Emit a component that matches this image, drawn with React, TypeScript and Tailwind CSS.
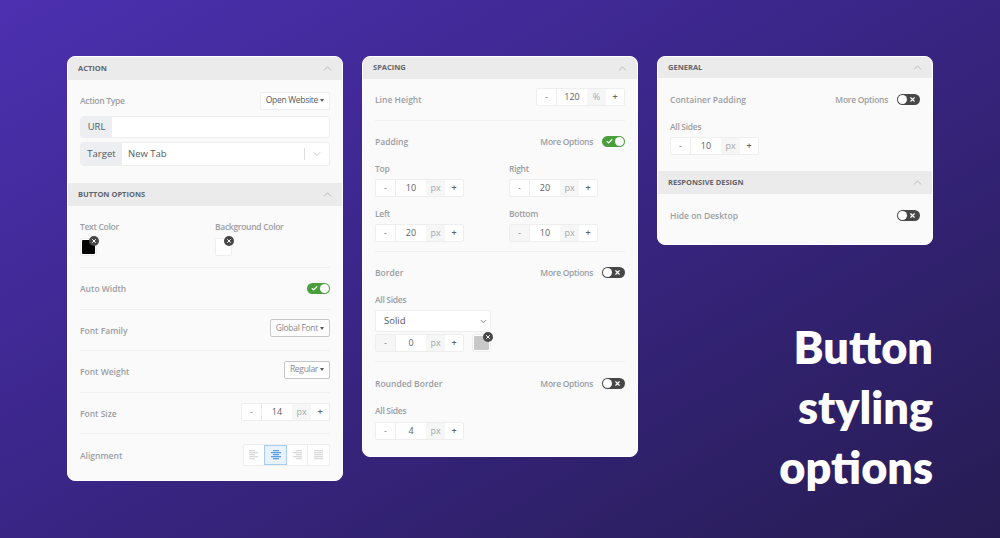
import { Check, ChevronDown, ChevronUp, X } from "lucide-react";
import type { ReactNode } from "react";

function SectionHeader({ title, className = "h-[23px]" }: { title: string; className?: string }) {
  return (
    <div className={`flex items-center justify-between bg-[#ebebeb] pl-[10px] pr-[8px] ${className}`}>
      <span className="text-[7.5px] font-bold uppercase text-[#5f656c]">{title}</span>
      <ChevronUp size={13} strokeWidth={1.5} className="text-[#a9acb0]" />
    </div>
  );
}

function Label({ children, small = false }: { children: ReactNode; small?: boolean }) {
  return (
    <span className={`block text-[8.5px] font-semibold leading-[9px] text-[#9a9da2] ${small ? "tracking-[-0.3px]" : ""}`}>
      {children}
    </span>
  );
}

function Divider() {
  return <div className="h-px bg-[#f0f0f0]" />;
}

function Stepper({ value, unit = "px", muted = false, className = "" }: { value: string; unit?: string; muted?: boolean; className?: string }) {
  return (
    <div className={`flex h-[18px] w-[89px] shrink-0 items-stretch rounded-[2px] border border-[#eeeeee] bg-white text-[9px] text-[#5d6166] ${className}`}>
      <span className={`flex w-[19px] items-center justify-center text-[#808388] ${muted ? "bg-[#f6f6f6]" : ""}`}>-</span>
      <span className="flex w-[31px] items-center justify-center border-l border-[#eeeeee]">{value}</span>
      <span className="flex w-[19px] items-center justify-center bg-[#f6f6f6] text-[#a5a8ac]">{unit}</span>
      <span className="flex flex-1 items-center justify-center font-semibold">+</span>
    </div>
  );
}

function Toggle({ on = false }: { on?: boolean }) {
  if (on) {
    return (
      <div className="flex h-[11px] w-[23px] items-center justify-between rounded-full bg-[#4a9e3c] pl-[4px] pr-px">
        <Check size={7} strokeWidth={4} className="text-white" />
        <span className="h-[9px] w-[9px] rounded-full bg-white" />
      </div>
    );
  }
  return (
    <div className="flex h-[11px] w-[23px] items-center justify-between rounded-full bg-[#474747] pl-px pr-[4px]">
      <span className="h-[9px] w-[9px] rounded-full bg-white" />
      <X size={7} strokeWidth={4} className="text-white" />
    </div>
  );
}

function MoreOptions({ on = false }: { on?: boolean }) {
  return (
    <div className="flex items-center gap-[9px]">
      <Label small>More Options</Label>
      <Toggle on={on} />
    </div>
  );
}

function Swatch({ color, className = "h-[18px] w-[18px]" }: { color: string; className?: string }) {
  return (
    <div className={`relative rounded-[2px] border border-[#eeeeee] bg-white p-px ${className}`}>
      <div className={`h-full w-full rounded-[1px] ${color}`} />
      <span className="absolute -top-[3px] -right-[3px] flex h-[10px] w-[10px] items-center justify-center rounded-full bg-[#474747]">
        <X size={6} strokeWidth={4} className="text-white" />
      </span>
    </div>
  );
}

function Dropdown({ label, outlined = false }: { label: string; outlined?: boolean }) {
  return (
    <div
      className={`flex h-[18px] items-center gap-[2px] rounded-[2px] bg-white px-[5px] text-[8.5px] tracking-[-0.3px] ${
        outlined ? "mb-[4px] border border-[#c4c6c8] text-[#85888d]" : "border border-[#f0f0f0] text-[#55595e]"
      }`}
    >
      {label}
      <span className="h-0 w-0 border-x-[2.5px] border-t-[3px] border-x-transparent border-t-[#55595e]" />
    </div>
  );
}

function AlignIcon({ lines, color }: { lines: [number, number][]; color: string }) {
  return (
    <svg width="10" height="10" viewBox="0 0 10 10" className={color}>
      {lines.map(([x, w], i) => (
        <rect key={i} x={x} y={i * 2} width={w} height="1.3" fill="currentColor" />
      ))}
    </svg>
  );
}

function Alignment() {
  const gray = "text-[#d9dadb]";
  return (
    <div className="flex h-[22px] w-[87px] items-stretch rounded-[2px] border border-[#eeeeee] bg-white">
      <div className="flex w-[20px] items-center justify-center">
        <AlignIcon color={gray} lines={[[0, 6], [0, 9], [0, 6], [0, 9], [0, 6]]} />
      </div>
      <div className="flex w-[23px] items-center justify-center border border-[#a9cdf2] bg-[#e8f2fd]">
        <AlignIcon color="text-[#5a9fe8]" lines={[[2, 6], [0, 10], [2, 6], [0, 10], [2, 6]]} />
      </div>
      <div className="flex w-[21px] items-center justify-center border-r border-[#eeeeee]">
        <AlignIcon color={gray} lines={[[4, 6], [1, 9], [4, 6], [1, 9], [4, 6]]} />
      </div>
      <div className="flex flex-1 items-center justify-center">
        <AlignIcon color={gray} lines={[[0, 9], [0, 9], [0, 9], [0, 9], [0, 9]]} />
      </div>
    </div>
  );
}

function Row({ children, className = "" }: { children: ReactNode; className?: string }) {
  return <div className={`flex items-center justify-between ${className}`}>{children}</div>;
}

function Panel({ children }: { children: ReactNode }) {
  return <div className="w-[276px] overflow-hidden rounded-[8px] border border-white bg-[#fafafa]">{children}</div>;
}

function ActionPanel() {
  return (
    <Panel>
      <SectionHeader title="Action" />
      <div className="px-[12px] pb-[17px]">
        <Row className="mt-[12px] h-[17px]">
          <Label small>Action Type</Label>
          <Dropdown label="Open Website" />
        </Row>
        <div className="mt-[7px] flex h-[22px] overflow-hidden rounded-[3px] border border-[#eeeeee] bg-white text-[9.5px] text-[#55595e]">
          <span className="flex w-[31px] items-center justify-center bg-[#eceef1]">URL</span>
        </div>
        <div className="mt-[4px] flex h-[24px] items-center overflow-hidden rounded-[3px] border border-[#eeeeee] bg-white text-[9.5px] text-[#55595e]">
          <span className="flex h-full w-[41px] items-center justify-center bg-[#eceef1]">Target</span>
          <span className="ml-[6px] flex-1">New Tab</span>
          <span className="h-[12px] w-px bg-[#dddddd]" />
          <ChevronDown size={12} strokeWidth={1.5} className="mx-[6px] text-[#b5b7ba]" />
        </div>
      </div>
      <SectionHeader title="Button Options" />
      <div className="px-[12px]">
        <div className="flex h-[61px] pt-[16px]">
          <div className="w-[135px]">
            <Label small>Text Color</Label>
            <Swatch color="bg-black" className="mt-[7px] h-[18px] w-[17px]" />
          </div>
          <div>
            <Label small>Background Color</Label>
            <Swatch color="bg-white" className="mt-[7px] h-[18px] w-[17px]" />
          </div>
        </div>
        <Divider />
        <Row className="h-[40.5px] pt-px">
          <Label>Auto Width</Label>
          <Toggle on />
        </Row>
        <Divider />
        <Row className="h-[40.5px] pt-px">
          <Label>Font Family</Label>
          <Dropdown label="Global Font" outlined />
        </Row>
        <Divider />
        <Row className="h-[40.5px] pt-px">
          <Label>Font Weight</Label>
          <Dropdown label="Regular" outlined />
        </Row>
        <Divider />
        <Row className="h-[40.5px] pt-px">
          <Label>Font Size</Label>
          <Stepper value="14" className="mb-[3px]" />
        </Row>
        <Divider />
        <Row className="h-[46px] pb-[4px]">
          <Label>Alignment</Label>
          <Alignment />
        </Row>
      </div>
    </Panel>
  );
}

function LabelledStepper({ label, value, muted }: { label: string; value: string; muted?: boolean }) {
  return (
    <div>
      <Label small>{label}</Label>
      <Stepper value={value} muted={muted} className="mt-[6px]" />
    </div>
  );
}

function SpacingPanel() {
  return (
    <Panel>
      <SectionHeader title="Spacing" className="h-[22px]" />
      <div className="px-[12px] pb-[16px]">
        <Row className="h-[41px]">
          <Label>Line Height</Label>
          <Stepper value="120" unit="%" className="mb-[5px]" />
        </Row>
        <Divider />
        <Row className="mt-[15px] h-[11px]">
          <Label>Padding</Label>
          <MoreOptions on />
        </Row>
        <div className="mt-[17px] grid grid-cols-[134px_89px]">
          <LabelledStepper label="Top" value="10" />
          <LabelledStepper label="Right" value="20" />
        </div>
        <div className="mt-[12px] grid grid-cols-[134px_89px]">
          <LabelledStepper label="Left" value="20" />
          <LabelledStepper label="Bottom" value="10" muted />
        </div>
        <div className="mt-[9px]">
          <Divider />
        </div>
        <Row className="mt-[15px] h-[11px]">
          <Label>Border</Label>
          <MoreOptions />
        </Row>
        <div className="mt-[17px]">
          <Label small>All Sides</Label>
        </div>
        <div className="mt-[6px] flex h-[22px] w-[116px] items-center justify-between rounded-[2px] border border-[#eeeeee] bg-white pl-[8px] pr-[2px] text-[9.5px] text-[#55595e]">
          Solid
          <ChevronDown size={9} strokeWidth={2} />
        </div>
        <div className="mt-[2px] flex w-[116px] items-center justify-between">
          <Stepper value="0" muted />
          <Swatch color="bg-[#c8c8c8]" className="h-[18px] w-[19px]" />
        </div>
        <div className="mt-[9px]">
          <Divider />
        </div>
        <Row className="mt-[16px] h-[11px]">
          <Label>Rounded Border</Label>
          <MoreOptions />
        </Row>
        <div className="mt-[17px]">
          <Label small>All Sides</Label>
        </div>
        <Stepper value="4" className="mt-[7px]" />
      </div>
    </Panel>
  );
}

function GeneralPanel() {
  return (
    <Panel>
      <SectionHeader title="General" className="h-[21px]" />
      <div className="px-[12px] pb-[16px]">
        <Row className="mt-[16px] h-[11px]">
          <Label>Container Padding</Label>
          <MoreOptions />
        </Row>
        <div className="mt-[17px]">
          <Label small>All Sides</Label>
        </div>
        <Stepper value="10" className="mt-[6px]" />
      </div>
      <SectionHeader title="Responsive Design" />
      <Row className="mt-[16px] mb-[23px] h-[11px] px-[12px]">
        <Label>Hide on Desktop</Label>
        <Toggle />
      </Row>
    </Panel>
  );
}

export default function App() {
  return (
    <div className="flex h-[538px] w-[1000px] items-start gap-[19px] overflow-hidden bg-[linear-gradient(150deg,#4c30b0_0%,#3a2688_45%,#271c52_100%)] pl-[67px] pt-[56px] font-['Open_Sans',sans-serif]">
      <ActionPanel />
      <SpacingPanel />
      <div className="flex w-[276px] flex-col">
        <GeneralPanel />
        <h1 className="mt-[72px] text-right font-['Lato',sans-serif] text-[45px] font-extrabold leading-[60px] text-white">
          Button
          <br />
          styling
          <br />
          options
        </h1>
      </div>
    </div>
  );
}
